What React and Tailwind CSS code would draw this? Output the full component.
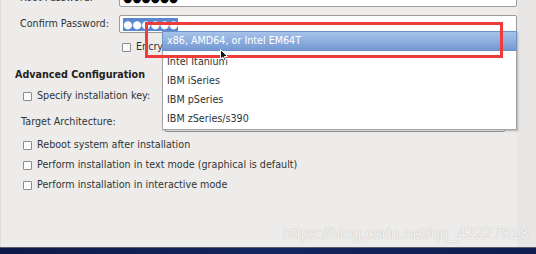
import React from 'react';

const Checkbox = () => (
  <span className="inline-block w-[9px] h-[9px] border border-[#8c8c8c] bg-[#fbfbfb] rounded-[1px] shrink-0" />
);

const CheckRow = ({ label, className = '' }) => (
  <div className={`flex items-center h-[16px] pl-[22px] whitespace-nowrap ${className}`}>
    <Checkbox />
    <span className="ml-[5px]">{label}</span>
  </div>
);

const archOptions = ['Intel Itanium', 'IBM iSeries', 'IBM pSeries', 'IBM zSeries/s390'];

const Cursor = () => (
  <svg className="absolute left-[220px] top-[49px]" width="9" height="13" viewBox="0 0 9 13">
    <path d="M0.5 0.5 L0.5 10 L2.8 8 L4.6 12 L6 11.3 L4.3 7.5 L7.5 7.5 Z" fill="#111" stroke="#fff" strokeWidth="1" />
  </svg>
);

export default function App() {
  return (
    <div className="relative w-[536px] h-[254px] overflow-hidden bg-[#eeecea] text-[9.6px] text-[#2e3436] font-['DejaVu_Sans',sans-serif]">
      <div className="flex h-[247px]">
        {/* form column */}
        <div className="w-[517px] h-full border-l border-[#dedcda]">
          <div className="flex flex-col mt-[-11px]">
            <div className="flex items-center h-[18px] whitespace-nowrap">
              <span className="w-[118px] shrink-0 pl-[19px]">Root Password:</span>
              <div className="flex-1 h-full flex items-center pl-[3px] bg-white border border-[#9c9c9c] rounded-[2px]">
                <span className="text-[10.5px] leading-none text-black">●●●●●●</span>
              </div>
            </div>
            <div className="flex items-center h-[18px] mt-[8px] whitespace-nowrap">
              <span className="w-[118px] shrink-0 pl-[19px]">Confirm Password:</span>
              <div className="flex-1 h-full flex items-center pl-[3px] bg-white border border-[#9c9c9c] rounded-[2px]">
                <span className="h-[13px] flex items-center bg-[#5a88cf] text-[10.5px] leading-none text-white">●●●●●●</span>
              </div>
            </div>
            <div className="flex items-center h-[16px] mt-[6px] pl-[121px] whitespace-nowrap">
              <Checkbox />
              <span className="ml-[5px]">Encrypt root password</span>
            </div>
            <div className="flex items-center h-[16px] mt-[12px] pl-[14px] font-bold text-[#222] whitespace-nowrap">
              Advanced Configuration
            </div>
            <CheckRow label="Specify installation key:" className="mt-[5px]" />
            <div className="flex items-center h-[20px] mt-[8px] whitespace-nowrap">
              <span className="w-[164px] shrink-0 pl-[20px]">Target Architecture:</span>
              <div className="w-[340px] h-full flex items-center pl-[4px] bg-white border border-[#9c9c9c] rounded-[2px]">
                IBM zSeries/s390
              </div>
            </div>
            <CheckRow label="Reboot system after installation" className="mt-[5px]" />
            <CheckRow label="Perform installation in text mode (graphical is default)" className="mt-[4px]" />
            <CheckRow label="Perform installation in interactive mode" className="mt-[4px]" />
          </div>
        </div>
        <div className="flex-1 h-full bg-[#e9e7e5]" />
      </div>
      <div className="h-px bg-[#5c5f6a]" />
      <div className="h-[6px] bg-gradient-to-r from-[#0c1a48] via-[#13265e] to-[#0e1d4e]" />

      {/* open architecture list */}
      <div className="absolute left-[162px] top-[31px] w-[355px] h-[99px] bg-white border border-[#a4a4a4] shadow-[1px_1px_2px_rgba(0,0,0,0.25)]">
        <div className="flex items-center h-[20px] pl-[4px] text-white bg-gradient-to-b from-[#a6c2e9] via-[#8eafe0] to-[#7399d2] border border-[#6e91c6] mx-[-1px] mt-[-1px]">
          x86, AMD64, or Intel EM64T
        </div>
        <div className="pt-[2px]">
          {archOptions.map((opt) => (
            <div key={opt} className="flex items-center h-[19px] pl-[4px]">
              {opt}
            </div>
          ))}
        </div>
      </div>

      {/* annotation box */}
      <div className="absolute left-[145px] top-[22px] w-[358px] h-[36px] border-[3px] border-[#f03b3b]" />

      <Cursor />

      <div className="absolute left-[283px] top-[225px] text-[16px] leading-[18px] font-['Liberation_Sans',sans-serif] text-[#f5f4f3] [text-shadow:0_0_1px_#a9a7a5]">
        https://blog.csdn.net/qq_42227818
      </div>
    </div>
  );
}
